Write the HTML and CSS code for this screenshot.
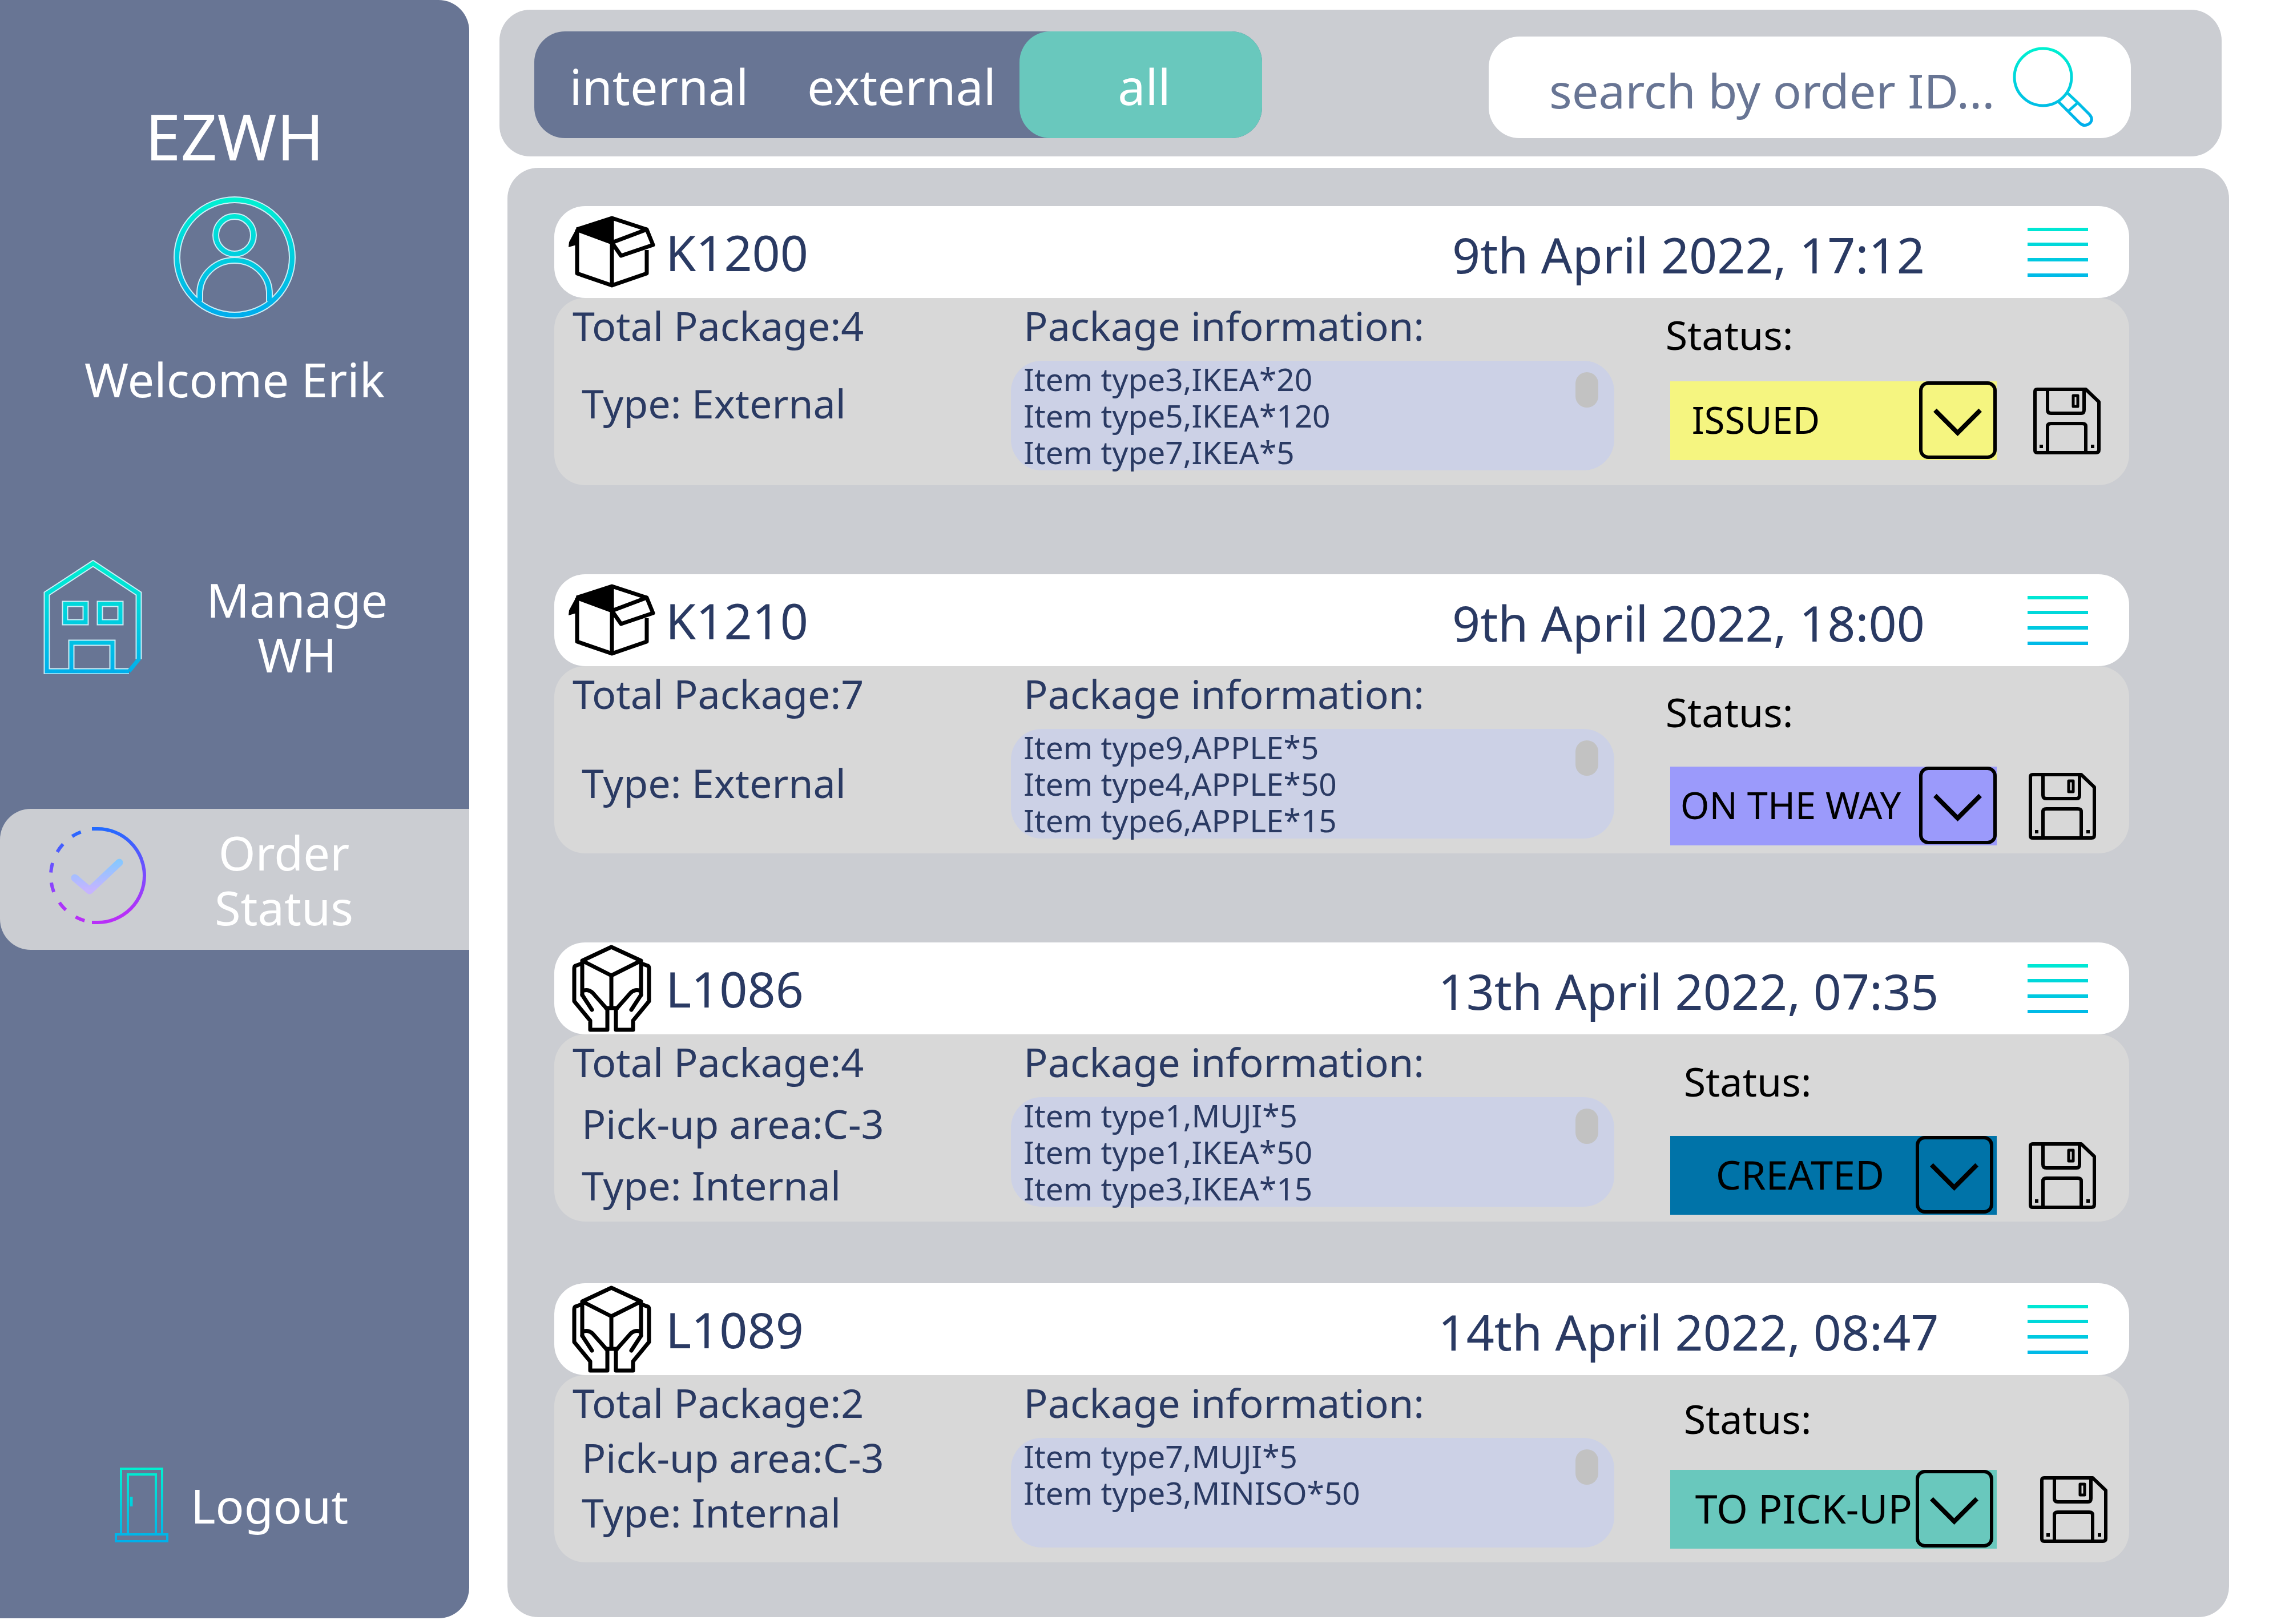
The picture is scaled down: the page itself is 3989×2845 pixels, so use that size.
FILE: index.html
```html
<!DOCTYPE html>
<html lang="en">
<head>
<meta charset="utf-8">
<meta name="viewport" content="width=device-width, initial-scale=1">
<title>EZWH - Order Status</title>
<link rel="stylesheet" href="styles.css">
</head>
<body>
<svg class="sprite" aria-hidden="true">
  <defs>
    <linearGradient id="aqua-l" gradientUnits="userSpaceOnUse" x1="0" y1="0" x2="0" y2="200"><stop offset="0" stop-color="#00f2d0"/><stop offset="1" stop-color="#00aeec"/></linearGradient>
    <linearGradient id="aqua-m" gradientUnits="userSpaceOnUse" x1="0" y1="0" x2="0" y2="135"><stop offset="0" stop-color="#00f2d0"/><stop offset="1" stop-color="#00aeec"/></linearGradient>
    <linearGradient id="aqua-s" gradientUnits="userSpaceOnUse" x1="0" y1="-6" x2="0" y2="96"><stop offset="0" stop-color="#00ecd2"/><stop offset="1" stop-color="#00b4ea"/></linearGradient>
    <linearGradient id="violet" gradientUnits="userSpaceOnUse" x1="0" y1="0" x2="0" y2="169"><stop offset="0" stop-color="#1f6bff"/><stop offset="0.5" stop-color="#7b4bff"/><stop offset="0.9" stop-color="#b82ff8"/></linearGradient>
    <linearGradient id="tick" gradientUnits="userSpaceOnUse" x1="0" y1="60" x2="0" y2="112"><stop offset="0" stop-color="#86c8ff"/><stop offset="1" stop-color="#c6b4ff"/></linearGradient>
  </defs>
  <symbol id="i-box" viewBox="0 0 153 128">
    <path d="M15 24 77 4V47Z M15 22 2 46 1 55 15 51Z" fill="#000"/>
    <path d="M15 24 77 4 138 24 M16 24V101L77 122 138 101V60 M77 47V122 M15 24 77 47 138 24 149 51 93 70 77 47 M77 4V47" fill="none" stroke="#000" stroke-width="7" stroke-linejoin="round"/>
  </symbol>
  <symbol id="i-hands" viewBox="0 0 139 154">
    <g fill="none" stroke="#000" stroke-width="7" stroke-linejoin="round" stroke-linecap="round">
      <path d="M69 4 121 28 69 54 18 28Z M18 28V88 M121 28V88 M69 54V111 M60 111H79"/>
      <path id="hand" d="M17 33 6 37Q4 38 4 42V99L32 133V149H62V115Q62 112 59 110L36 84Q29 78 21 80 M18 88 35 114"/>
      <use href="#hand" transform="translate(139) scale(-1 1)"/>
    </g>
  </symbol>
  <symbol id="i-menu" viewBox="0 0 106 88">
    <path d="M0 4H106M0 30H106M0 57H106M0 84H106" fill="none" stroke="url(#aqua-s)" stroke-width="6"/>
  </symbol>
  <symbol id="i-save" viewBox="0 0 118 117">
    <g fill="none" stroke="#000" stroke-width="6" stroke-linejoin="round">
      <path d="M7 3H92L115 25V109Q115 114 110 114H7Q3 114 3 110V7Q3 3 7 3Z"/>
      <path d="M25 3V39Q25 45 31 45H84Q89 45 89 39V3 M25 114V68Q25 63 31 63H86Q92 63 92 68V114"/>
      <rect x="70" y="14" width="8" height="19" stroke-width="5"/>
    </g>
    <path d="M11 100h6v6h-6z M101 100h6v6h-6z"/>
  </symbol>
  <symbol id="i-chevron" viewBox="0 0 125 125">
    <path d="M22 45 62 85 102 45" fill="none" stroke="#000" stroke-width="8"/>
  </symbol>
</svg>

<div class="app">
  <aside class="sidebar">
    <h1 class="brand">EZWH</h1>
    <svg class="avatar" viewBox="0 0 214 214" role="img" aria-label="User">
      <g fill="none" stroke="#c9eef6" stroke-width="12">
        <circle cx="107" cy="107" r="101"/><circle cx="107" cy="68" r="33"/><path d="M46 184V170A61 58 0 0 1 168 170V184"/>
      </g>
      <g fill="none" stroke="url(#aqua-l)" stroke-width="8">
        <circle cx="107" cy="107" r="101"/><circle cx="107" cy="68" r="33"/><path d="M46 184V170A61 58 0 0 1 168 170V184"/>
      </g>
    </svg>
    <p class="welcome">Welcome Erik</p>
    <nav class="nav">
      <a class="nav__item" href="#manage">
        <svg class="nav__icon nav__icon--house" viewBox="0 0 173 200" aria-hidden="true">
          <g fill="none" stroke="#c9eef6" stroke-width="11">
            <path d="M150 195H6V59L87 6 167 59V174 M49 195V145H121V195 M38 77H74V109H38Z M99 77H135V109H99Z"/>
          </g>
          <g fill="none" stroke="url(#aqua-l)" stroke-width="7">
            <path d="M150 195H6V59L87 6 167 59V174L150 195 M49 195V145H121V195 M38 77H74V109H38Z M99 77H135V109H99Z"/>
          </g>
        </svg>
        <span class="nav__label">Manage<br>WH</span>
      </a>
      <a class="nav__item nav__item--active" href="#orders" aria-current="page">
        <svg class="nav__icon" viewBox="0 0 173 173" aria-hidden="true">
          <g fill="none">
            <path d="M77 4H87A82 82 0 0 1 87 168H77" stroke="url(#violet)" stroke-width="6"/>
            <path d="M87 4A82 82 0 0 0 87 168" stroke="url(#violet)" stroke-width="6" stroke-dasharray="0 30 17 21 17 21 17 18 17 21 17 21 17 60"/>
            <path d="M47 90 73 112 125 63" stroke="url(#tick)" stroke-width="13" stroke-linecap="round" stroke-linejoin="round"/>
          </g>
        </svg>
        <span class="nav__label">Order<br>Status</span>
      </a>
    </nav>
    <a class="logout" href="#logout">
      <svg class="logout__icon" viewBox="0 0 96 133" aria-hidden="true">
        <g fill="none" stroke="url(#aqua-m)" stroke-width="4">
          <path d="M12 118V3H84V118 M24 118V13H73V118 M3 118H93V130H3Z"/>
          <path d="M30 52V69" stroke-width="5"/>
        </g>
      </svg>
      <span>Logout</span>
    </a>
  </aside>

  <main class="main">
    <header class="topbar">
      <div class="tabs">
        <button class="tab" type="button">internal</button>
        <button class="tab" type="button">external</button>
        <button class="tab tab--active" type="button" aria-pressed="true">all</button>
      </div>
      <form class="search" role="search">
        <input class="search__input" type="search" placeholder="search by order ID..." aria-label="Search by order ID">
        <button class="icon-button" type="submit" aria-label="Search">
          <svg class="search__icon" viewBox="0 0 142 142" aria-hidden="true">
            <g fill="none" stroke="url(#aqua-m)" stroke-width="5" stroke-linejoin="round">
              <circle cx="54" cy="53" r="50"/>
              <path d="M97 81 115 98M81 96 98 113M98 113 115 98 135 118Q143 127 136 134 127 141 119 134Z"/>
            </g>
          </svg>
        </button>
      </form>
    </header>

    <section class="orders" aria-label="Orders">
      <article class="order order--external order--medium">
        <header class="order__head">
          <h2 class="order__id"><svg class="order__icon" viewBox="0 0 153 128" aria-hidden="true"><use href="#i-box"/></svg>K1200</h2>
          <time class="order__date" datetime="2022-04-09T17:12">9th April 2022, 17:12</time>
          <button class="icon-button" type="button" aria-label="Order menu"><svg class="menu-icon" aria-hidden="true"><use href="#i-menu"/></svg></button>
        </header>
        <div class="order__body">
          <div class="facts"><p>Total Package:4</p><p class="facts__sub">Type: External</p></div>
          <div class="info">
            <h3 class="info__title">Package information:</h3>
            <div class="items"><ul class="items__list"><li>Item type3,IKEA*20</li><li>Item type5,IKEA*120</li><li>Item type7,IKEA*5</li></ul><span class="items__thumb"></span></div>
          </div>
          <div class="status">
            <label class="status__label" for="s1">Status:</label>
            <div class="status__row">
              <div class="picker">
                <select class="picker__select picker__select--issued" id="s1"><option>ISSUED</option><option>ON THE WAY</option></select>
                <svg class="picker__arrow" aria-hidden="true"><use href="#i-chevron"/></svg>
              </div>
              <button class="icon-button" type="button" aria-label="Save status"><svg class="save-icon" aria-hidden="true"><use href="#i-save"/></svg></button>
            </div>
          </div>
        </div>
      </article>

      <article class="order order--external order--roomy">
        <header class="order__head">
          <h2 class="order__id"><svg class="order__icon" viewBox="0 0 153 128" aria-hidden="true"><use href="#i-box"/></svg>K1210</h2>
          <time class="order__date" datetime="2022-04-09T18:00">9th April 2022, 18:00</time>
          <button class="icon-button" type="button" aria-label="Order menu"><svg class="menu-icon" aria-hidden="true"><use href="#i-menu"/></svg></button>
        </header>
        <div class="order__body">
          <div class="facts"><p>Total Package:7</p><p class="facts__sub">Type: External</p></div>
          <div class="info">
            <h3 class="info__title">Package information:</h3>
            <div class="items"><ul class="items__list"><li>Item type9,APPLE*5</li><li>Item type4,APPLE*50</li><li>Item type6,APPLE*15</li></ul><span class="items__thumb"></span></div>
          </div>
          <div class="status">
            <label class="status__label" for="s2">Status:</label>
            <div class="status__row">
              <div class="picker">
                <select class="picker__select picker__select--way" id="s2"><option>ON THE WAY</option><option>ISSUED</option></select>
                <svg class="picker__arrow" aria-hidden="true"><use href="#i-chevron"/></svg>
              </div>
              <button class="icon-button" type="button" aria-label="Save status"><svg class="save-icon" aria-hidden="true"><use href="#i-save"/></svg></button>
            </div>
          </div>
        </div>
      </article>

      <article class="order order--internal order--snug">
        <header class="order__head">
          <h2 class="order__id"><svg class="order__icon order__icon--hands" viewBox="0 0 139 154" aria-hidden="true"><use href="#i-hands"/></svg>L1086</h2>
          <time class="order__date" datetime="2022-04-13T07:35">13th April 2022, 07:35</time>
          <button class="icon-button" type="button" aria-label="Order menu"><svg class="menu-icon" aria-hidden="true"><use href="#i-menu"/></svg></button>
        </header>
        <div class="order__body">
          <div class="facts"><p>Total Package:4</p><p class="facts__sub">Pick-up area:C-3</p><p class="facts__sub">Type: Internal</p></div>
          <div class="info">
            <h3 class="info__title">Package information:</h3>
            <div class="items"><ul class="items__list"><li>Item type1,MUJI*5</li><li>Item type1,IKEA*50</li><li>Item type3,IKEA*15</li></ul><span class="items__thumb"></span></div>
          </div>
          <div class="status">
            <label class="status__label" for="s3">Status:</label>
            <div class="status__row">
              <div class="picker">
                <select class="picker__select picker__select--created" id="s3"><option>CREATED</option><option>TO PICK-UP</option></select>
                <svg class="picker__arrow" aria-hidden="true"><use href="#i-chevron"/></svg>
              </div>
              <button class="icon-button" type="button" aria-label="Save status"><svg class="save-icon" aria-hidden="true"><use href="#i-save"/></svg></button>
            </div>
          </div>
        </div>
      </article>

      <article class="order order--internal order--tight">
        <header class="order__head">
          <h2 class="order__id"><svg class="order__icon order__icon--hands" viewBox="0 0 139 154" aria-hidden="true"><use href="#i-hands"/></svg>L1089</h2>
          <time class="order__date" datetime="2022-04-14T08:47">14th April 2022, 08:47</time>
          <button class="icon-button" type="button" aria-label="Order menu"><svg class="menu-icon" aria-hidden="true"><use href="#i-menu"/></svg></button>
        </header>
        <div class="order__body">
          <div class="facts"><p>Total Package:2</p><p class="facts__sub">Pick-up area:C-3</p><p class="facts__sub">Type: Internal</p></div>
          <div class="info">
            <h3 class="info__title">Package information:</h3>
            <div class="items"><ul class="items__list"><li>Item type7,MUJI*5</li><li>Item type3,MINISO*50</li></ul><span class="items__thumb"></span></div>
          </div>
          <div class="status">
            <label class="status__label" for="s4">Status:</label>
            <div class="status__row">
              <div class="picker">
                <select class="picker__select picker__select--pickup" id="s4"><option>TO PICK-UP</option><option>CREATED</option></select>
                <svg class="picker__arrow" aria-hidden="true"><use href="#i-chevron"/></svg>
              </div>
              <button class="icon-button" type="button" aria-label="Save status"><svg class="save-icon" aria-hidden="true"><use href="#i-save"/></svg></button>
            </div>
          </div>
        </div>
      </article>
    </section>
  </main>
</div>
</body>
</html>
```
FILE: styles.css
```css
:root {
  --slate: #687594;
  --grey: #cbcdd2;
  --navy: #2a3a63;
  --teal: #69c8bd;
  --radius: 54px;
  --text-xl: 112px;
  --text-lg: 86px;
  --text-nav: 83px;
  --text-md: 70px;
  --text-select: 65px;
  --text-sm: 55px;
}

* { box-sizing: border-box; }

body, h1, h2, h3, p, ul { margin: 0; padding: 0; }

body {
  background: #fff;
  color: var(--navy);
  font-family: "Noto Sans", sans-serif;
  font-size: var(--text-md);
  line-height: 80px;
}

h1, h2, h3, button, input, select { font: inherit; }

svg { display: block; flex: none; }

.sprite { position: absolute; width: 0; height: 0; }

.icon-button {
  flex: none;
  padding: 0;
  border: 0;
  background: none;
}

.app {
  display: grid;
  grid-template-columns: minmax(0, 822fr) minmax(0, 3167fr);
  min-height: 100vh;
  padding-bottom: 10px;
}

/* Sidebar */

.sidebar {
  display: flex;
  flex-direction: column;
  padding: 178px 0 132px;
  border-radius: 0 var(--radius) var(--radius) 0;
  background: var(--slate);
  color: #fff;
  font-size: var(--text-nav);
}

.sidebar a { color: inherit; text-decoration: none; }

.brand {
  font-size: var(--text-xl);
  line-height: 120px;
  text-align: center;
}

.avatar {
  width: 214px;
  height: 214px;
  margin: 46px auto 56px;
}

.welcome { line-height: 100px; text-align: center; }

.nav {
  display: grid;
  gap: 196px;
  margin-top: 260px;
}

.nav__item {
  display: flex;
  align-items: center;
  min-height: 247px;
  padding: 0 30px 0 76px;
  line-height: 96px;
}

.nav__item--active {
  padding: 0 84px;
  border-radius: var(--radius) 0 0 var(--radius);
  background: var(--grey);
}

.nav__icon { width: 173px; height: 173px; margin-bottom: 12px; }
.nav__icon--house { height: 200px; margin-bottom: 34px; }

.nav__label { flex: 1; text-align: center; }

.logout {
  display: flex;
  align-items: center;
  gap: 38px;
  margin-top: auto;
  padding-left: 200px;
}

.logout__icon { width: 96px; height: 133px; }

/* Main column */

.main {
  display: flex;
  flex-direction: column;
  gap: 20px;
  padding: 17px 84px 2px 53px;
}

.topbar {
  display: flex;
  align-items: flex-end;
  justify-content: space-between;
  margin-right: 13px;
  padding: 38px 159px 32px 61px;
  border-radius: var(--radius);
  background: var(--grey);
}

.tabs {
  display: grid;
  grid-template-columns: repeat(3, 1fr);
  flex: 0 1 1275px;
  border-radius: var(--radius);
  background: var(--slate);
}

.tab {
  min-height: 187px;
  padding: 4px 0 0 12px;
  border: 0;
  border-radius: var(--radius);
  background: none;
  color: #fff;
  font-size: var(--text-lg);
}

.tab--active { background: var(--teal); }

.search {
  display: flex;
  flex: 0 1 1125px;
  align-items: center;
  min-width: 0;
  min-height: 178px;
  padding: 0 66px 0 106px;
  border-radius: var(--radius);
  background: #fff;
}

.search__input {
  flex: 1;
  min-width: 0;
  height: 128px;
  padding: 8px 0 0;
  border: 0;
  outline: 0;
  background: none;
  color: var(--slate);
  font-size: var(--text-nav);
  appearance: none;
}

.search__input::placeholder { color: var(--slate); opacity: 1; }

.search__icon { width: 142px; height: 142px; }

.orders {
  display: flex;
  flex: 1;
  flex-direction: column;
  gap: 108px;
  margin-left: 14px;
  padding: 67px 175px 96px 82px;
  border-radius: var(--radius);
  background: var(--grey);
}

/* Order card */

.order--external { margin-bottom: 48px; }

.order--medium { --fact-gap: 56px; --status-top: 24px; --status-gap: 42px; --save-gap: 64px; }
.order--roomy { --fact-gap: 76px; --status-top: 40px; --status-gap: 56px; --save-gap: 56px; }
.order--snug { --fact-gap: 28px; --status-top: 42px; --status-gap: 56px; --save-gap: 56px; }
.order--tight { --fact-gap: 16px; --status-top: 36px; --status-gap: 50px; --save-gap: 76px; }

.order__head {
  display: grid;
  grid-template-columns: 1fr 1060px auto;
  align-items: center;
  min-height: 161px;
  padding: 0 72px 0 24px;
  border-radius: var(--radius);
  background: #fff;
  font-size: var(--text-lg);
}

.order__id { display: flex; align-items: center; gap: 18px; }

.order__icon { width: 153px; height: 128px; }
.order__icon--hands { width: 153px; height: 154px; }

.order__date { padding-top: 8px; text-align: center; }

.menu-icon { width: 106px; height: 88px; margin-left: 64px; }

.order__body {
  display: grid;
  grid-template-columns: 800fr 1056fr 902fr;
  min-height: 328px;
  border-radius: var(--radius);
  background: #d8d8d8;
}

.facts {
  display: flex;
  flex-direction: column;
  gap: var(--fact-gap);
  padding: 8px 0 0 32px;
}

.facts__sub { padding-left: 16px; }

.info { padding-top: 8px; }

.info__title { padding-left: 22px; }

.items {
  position: relative;
  min-height: 192px;
  margin-top: 22px;
  border-radius: var(--radius);
  background: #ccd1e6;
}

.items__list {
  padding-left: 22px;
  font-size: var(--text-sm);
  line-height: 64px;
  list-style: none;
}

.items__thumb {
  position: absolute;
  top: 20px;
  right: 28px;
  width: 40px;
  height: 62px;
  border-radius: 20px;
  background: #c2c2c2;
}

.status {
  display: flex;
  flex-direction: column;
  gap: var(--status-gap);
  padding: var(--status-top) 0 0 98px;
  color: #000;
}

.order--external .status__label { margin-left: -8px; }
.order--internal .status__label { margin-left: 24px; }

.status__row {
  display: flex;
  align-items: center;
  gap: var(--save-gap);
}

.picker { position: relative; flex: 0 1 572px; }

.picker__select {
  display: block;
  width: 100%;
  height: 138px;
  padding: 0 140px 4px 38px;
  border: 0;
  border-radius: 0;
  color: #000;
  font-size: var(--text-select);
  appearance: none;
}

.picker__select--issued { background: #f5f580; }
.picker__select--way { padding-left: 18px; background: #9b9afb; }
.picker__select--created { padding-left: 80px; background: #0073a8; font-size: var(--text-md); }
.picker__select--pickup { padding-left: 44px; background: var(--teal); font-size: var(--text-md); }

.picker__arrow {
  position: absolute;
  top: 0;
  right: 0;
  width: 136px;
  height: 136px;
  border: 6px solid #000;
  border-radius: 16px;
  pointer-events: none;
}

.order--internal .picker__arrow { right: 6px; }

.save-icon { width: 118px; height: 117px; }
```
